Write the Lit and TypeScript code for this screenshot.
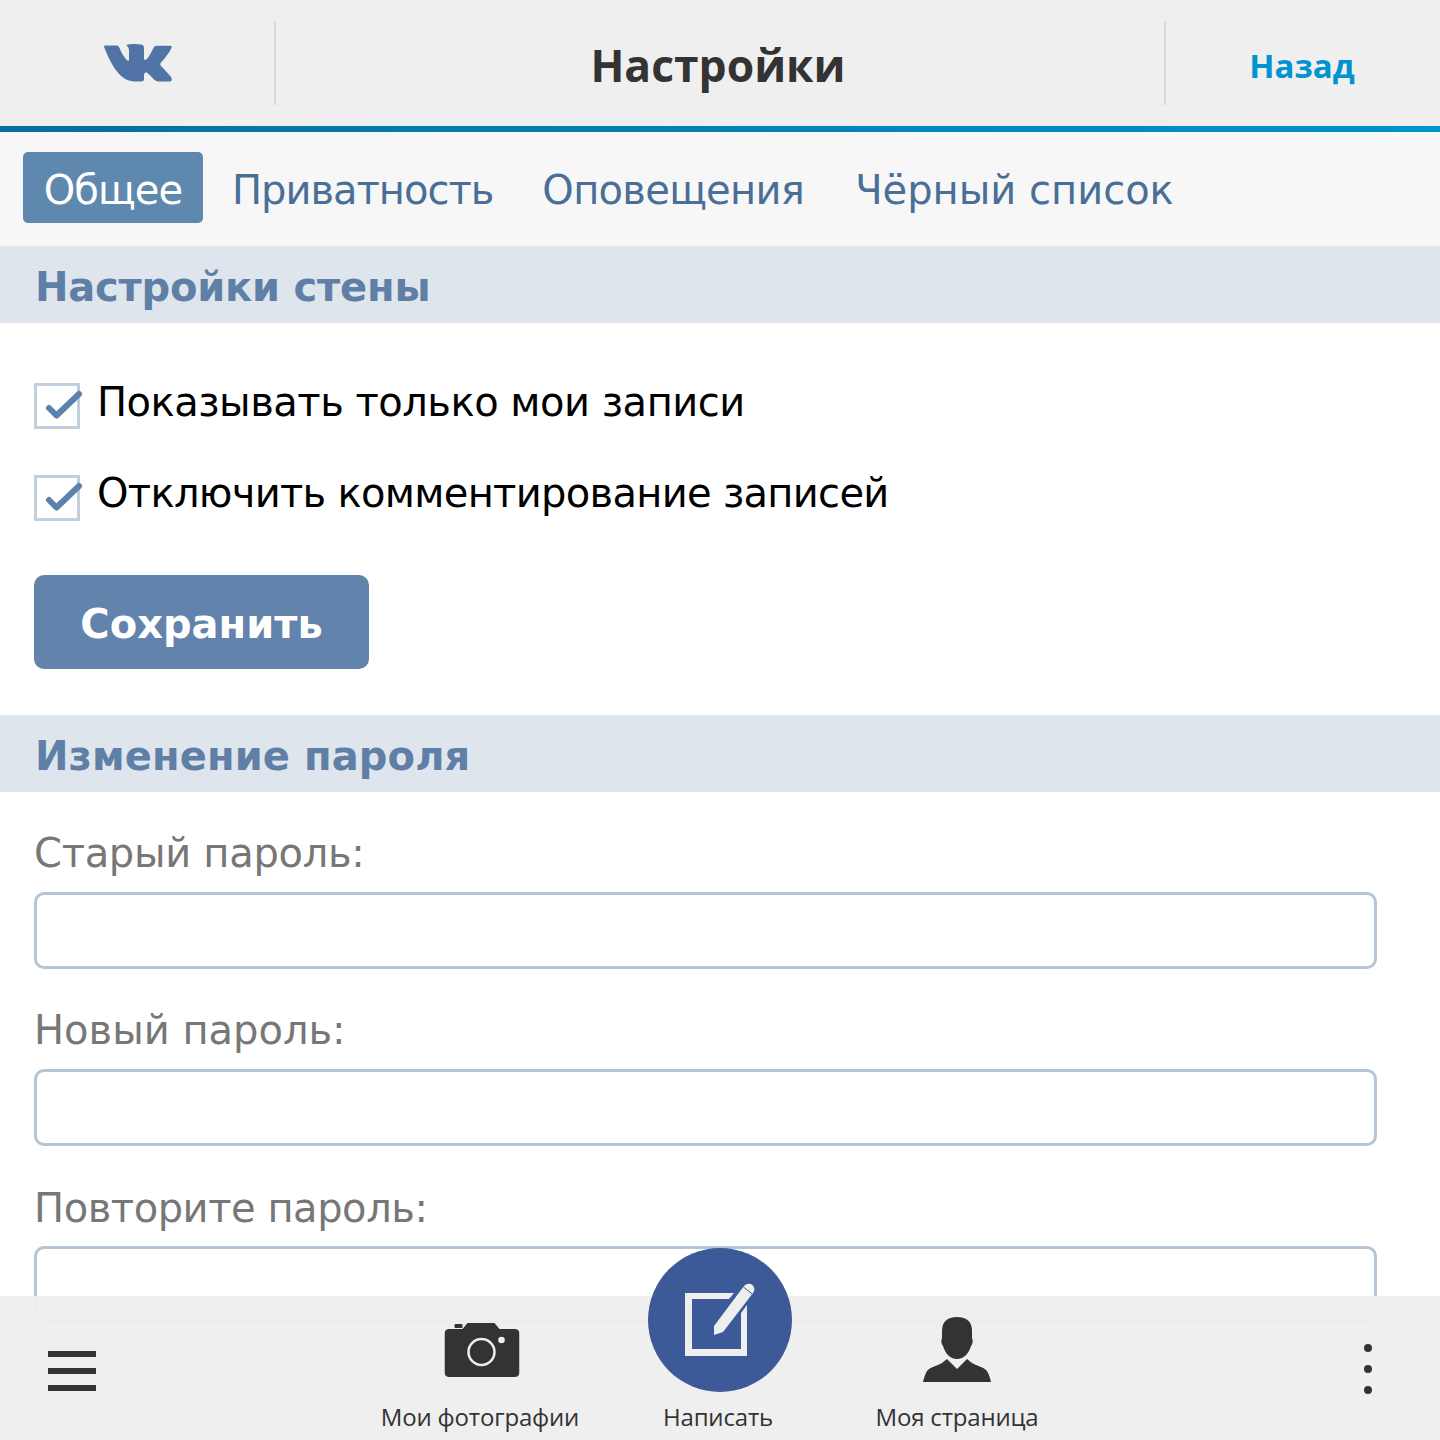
import { LitElement, css, html } from "lit"
import { customElement } from "lit/decorators.js"

const vkIcon = html`<svg width="68" height="38" viewBox="0 0 68 38"><path fill="#5173a6" d="M1 1.500H12.500Q14.500 1.500 15.200 3.200C17 8 20.500 14 23.500 16.500Q25 17.500 25 15.500V6Q25 3 22.500 1.500Q23 .500 25 .300Q32 -.300 37.500 .500Q40 1 40 4V14Q40 16.500 41.500 16Q44 15 49.500 4Q50.500 1.700 52.500 1.700H66Q68.500 1.700 67.500 4Q64 11 57 18.500Q55.500 20 57 22Q62 27 67 33Q69 36.500 66 37.500H54.500Q52 37.500 50 35.500C47 32.500 44 29 42.500 28.500Q40 28 40 31.500V35Q40 37.500 37 37.500H31C17 37.500 8 23 .300 3.500Q-.300 1.500 1 1.500Z"/></svg>`

const checkIcon = html`<svg class="check" width="46" height="46" viewBox="0 0 46 46"><path fill="none" stroke="#5a82ac" stroke-width="6" stroke-linecap="round" stroke-linejoin="round" d="M15 25 22.500 32.500 45 11"/></svg>`

const cameraIcon = html`<svg width="75" height="56" viewBox="0 0 75 56"><path fill="#333" d="M5 7H18L23 1H50L55 7H70Q75 7 75 12V50Q75 55 70 55H5Q0 55 0 50V12Q0 7 5 7ZM11 2H17Q18 2 18 3V5Q18 6 17 6H11Q10 6 10 5V3Q10 2 11 2Z"/><circle cx="37" cy="30" r="13" fill="none" stroke="#eee" stroke-width="2.500"/><circle cx="57" cy="18" r="3.300" fill="#eee"/></svg>`

const writeIcon = html`<svg width="72" height="76" viewBox="0 0 72 76"><path fill="#eee" d="M1 11H50L45 17H8V67H57V31L63 23V74H1Z"/><path fill="#eee" d="M30 44 60 4Q64 0 68.500 3Q72 7 69 11L39 50 30 53Z"/><path fill="none" stroke="#3c5a98" stroke-width="1" d="M59.500 5 68 12"/></svg>`

const profileIcon = html`<svg width="68" height="65" viewBox="0 0 68 65"><path fill="#333" d="M34 0C44 0 49 5 49 14V21C50 23 50 27 48 29C46 36 41 42 34 42C27 42 22 36 20 29C18 27 18 23 19 21V14C19 5 24 0 34 0ZM24 42 34 52 44 42 49 46C54 49 61 50 64 54C66 57 67 61 68 65H0C1 61 2 57 4 54C7 50 14 49 19 46Z"/></svg>`

@customElement("app-root")
export class AppRoot extends LitElement {
  static styles = css`
    :host {
      display: block;
      position: relative;
      width: 1440px;
      height: 1440px;
      overflow: hidden;
      background: #fff;
      font-family: "DejaVu Sans", sans-serif;
    }
    .top {
      display: flex;
      align-items: center;
      height: 126px;
      background: #efefef;
      font-family: "Open Sans", sans-serif;
    }
    .logo {
      display: flex;
      justify-content: center;
      align-items: center;
      width: 274px;
      height: 126px;
    }
    .logo svg {
      margin: -1px 0 0 1px;
    }
    .divider {
      width: 2px;
      height: 84px;
      background: #d8d8d8;
    }
    .title {
      flex: 1;
      box-sizing: border-box;
      padding: 4px 4px 0 0;
      text-align: center;
      font-size: 44.4px;
      font-weight: 700;
      color: #333;
      line-height: 60px;
    }
    .back {
      box-sizing: border-box;
      width: 274px;
      padding: 6px 2px 0 0;
      text-align: center;
      font-size: 33px;
      font-weight: 700;
      color: #0093cf;
      line-height: 46px;
    }
    .rule {
      height: 6px;
      background: linear-gradient(90deg, #056f9f, #0093cf);
    }
    .tabs {
      display: flex;
      align-items: center;
      box-sizing: border-box;
      height: 114px;
      padding: 0 0 4px 23px;
      background: #f7f7f7;
      font-size: 40px;
      color: #4a6f96;
    }
    .tab {
      height: 71px;
      line-height: 77px;
      white-space: nowrap;
    }
    .general {
      width: 180px;
      margin-right: 29px;
      border-radius: 5px;
      background: #5f88ae;
      color: #fff;
      text-align: center;
      letter-spacing: -0.9px;
    }
    .privacy {
      margin-right: 49px;
      letter-spacing: -1px;
    }
    .alerts {
      margin-right: 51px;
      letter-spacing: -0.7px;
    }
    .section {
      box-sizing: border-box;
      height: 77px;
      padding-left: 35px;
      background: #dee5ec;
      color: #5f7fa6;
      font-size: 40px;
      font-weight: 700;
      line-height: 83px;
    }
    .wall-title {
      letter-spacing: -0.2px;
    }
    .pass-title {
      letter-spacing: 0.1px;
    }
    .wall {
      box-sizing: border-box;
      height: 392px;
      padding: 60px 34px 0;
    }
    .option {
      display: flex;
      align-items: center;
      gap: 18px;
      height: 46px;
      margin-bottom: 46px;
      font-size: 40px;
      color: #000;
    }
    .option span {
      margin: -8px 0 0 -1px;
    }
    .only span {
      letter-spacing: -0.48px;
    }
    .comments span {
      margin-top: -10px;
      letter-spacing: -0.69px;
    }
    .box {
      box-sizing: border-box;
      width: 46px;
      height: 46px;
      border: 3px solid #c0cfdd;
      background: #fff;
      position: relative;
      flex: none;
    }
    .check {
      position: absolute;
      left: -3px;
      top: -3px;
      overflow: visible;
    }
    button {
      display: block;
      width: 335px;
      height: 94px;
      margin-top: 54px;
      padding: 4px 0 0;
      border: 0;
      border-radius: 10px;
      background: #6283ab;
      color: #fff;
      font: 700 40px "DejaVu Sans", sans-serif;
    }
    .password {
      padding: 37px 63px 0 34px;
    }
    .field {
      height: 177px;
    }
    label {
      display: block;
      height: 63px;
      font-size: 40px;
      line-height: 48px;
      color: #777;
    }
    .old label {
      letter-spacing: -0.3px;
    }
    .repeat label {
      line-height: 50px;
      letter-spacing: -0.45px;
    }
    .input {
      box-sizing: border-box;
      height: 77px;
      border: 3px solid #b5c5d5;
      border-radius: 10px;
      background: #fff;
    }
    .bar {
      position: absolute;
      left: 0;
      right: 0;
      bottom: 0;
      height: 144px;
      background: rgba(238, 238, 238, 0.96);
      font-family: "Open Sans", sans-serif;
      font-size: 24px;
      color: #333;
    }
    .menu {
      position: absolute;
      left: 48px;
      top: 55px;
      display: flex;
      flex-direction: column;
      gap: 11px;
    }
    .menu i {
      display: block;
      width: 48px;
      height: 6px;
      background: #333;
    }
    .more {
      position: absolute;
      left: 1364px;
      top: 48px;
      display: flex;
      flex-direction: column;
      gap: 13px;
    }
    .more i {
      display: block;
      width: 8px;
      height: 8px;
      border-radius: 50%;
      background: #333;
    }
    .item {
      position: absolute;
      top: 0;
      height: 144px;
      transform: translateX(-50%);
      white-space: nowrap;
    }
    .item svg {
      position: absolute;
      left: 50%;
      transform: translateX(-50%);
    }
    .item.photos svg {
      top: 26px;
      margin-left: 1.500px;
    }
    .item.profile svg {
      top: 21px;
    }
    .item span {
      position: absolute;
      top: 104px;
      left: 50%;
      transform: translateX(-50%);
      line-height: 34px;
      letter-spacing: -0.18px;
    }
    .fab {
      position: absolute;
      left: 648px;
      top: -48px;
      display: flex;
      align-items: center;
      justify-content: center;
      width: 144px;
      height: 144px;
      border-radius: 50%;
      background: #3c5a98;
    }
  `

  render () {
    return html`
      <div class="top">
        <div class="logo">${vkIcon}</div>
        <div class="divider"></div>
        <div class="title">Настройки</div>
        <div class="divider"></div>
        <div class="back">Назад</div>
      </div>
      <div class="rule"></div>
      <nav class="tabs">
        <div class="tab general">Общее</div>
        <div class="tab privacy">Приватность</div>
        <div class="tab alerts">Оповещения</div>
        <div class="tab">Чёрный список</div>
      </nav>
      <div class="section"><span class="wall-title">Настройки стены</span></div>
      <div class="wall">
        <div class="option only"><div class="box">${checkIcon}</div><span>Показывать только мои записи</span></div>
        <div class="option comments"><div class="box">${checkIcon}</div><span>Отключить комментирование записей</span></div>
        <button>Сохранить</button>
      </div>
      <div class="section"><span class="pass-title">Изменение пароля</span></div>
      <div class="password">
        <div class="field old"><label>Старый пароль:</label><div class="input"></div></div>
        <div class="field"><label>Новый пароль:</label><div class="input"></div></div>
        <div class="field repeat"><label>Повторите пароль:</label><div class="input"></div></div>
      </div>
      <div class="bar">
        <div class="menu"><i></i><i></i><i></i></div>
        <div class="item photos" style="left:480px">${cameraIcon}<span>Мои фотографии</span></div>
        <div class="fab">${writeIcon}</div>
        <div class="item" style="left:718px"><span>Написать</span></div>
        <div class="item profile" style="left:957px">${profileIcon}<span>Моя страница</span></div>
        <div class="more"><i></i><i></i><i></i></div>
      </div>
    `
  }
}
